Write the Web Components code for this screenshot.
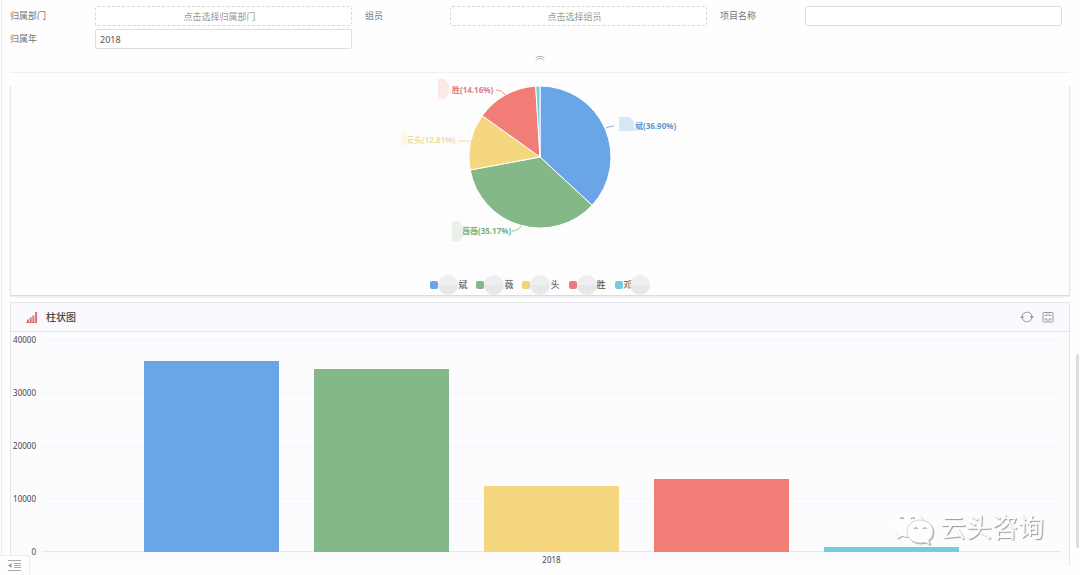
<!DOCTYPE html>
<html lang="zh-CN">
<head>
<meta charset="utf-8">
<title>柱状图</title>
<style>
html { height: 100%; }
body { margin: 0; min-height: 100%; background: #fefefe; color: #555; font: 9px/12px "Noto Sans", "Noto Sans CJK SC", sans-serif; }
</style>
</head>
<body>
<report-page></report-page>
<script>
const define = (name, html, setup) => customElements.define(name, class extends HTMLElement {
  connectedCallback() {
    if (this.shadowRoot) return;
    const root = this.attachShadow({ mode: "open" });
    const t = document.createElement("template");
    t.innerHTML = html;
    root.append(t.content.cloneNode(true));
    if (setup) setup(this, root);
  }
});

const SERIES = [
  { color: "#69a5e7", percent: 36.90, bar: 90.3 },
  { color: "#84b888", percent: 35.17, bar: 86.1 },
  { color: "#f4d77f", percent: 12.81, bar: 31.1 },
  { color: "#f27d76", percent: 14.16, bar: 34.4 },
  { color: "#75cddc", percent: 0.96, bar: 2.4 }
];

define("filter-field", `
<style>
:host { display: grid; grid-template-columns: 85px 1fr; align-items: center; padding-right: 13px; }
label { color: #777; }
input, button { box-sizing: border-box; width: 100%; height: 20px; margin: 0; padding: 0 4px; font: inherit; color: #555; background: #fff; border: 1px solid #dedede; border-radius: 2px; }
button { border: 1px dashed #d8d8d8; color: #999; text-align: center; padding: 1px 12px 0 4px; }
</style>`, (host, root) => {
  const label = document.createElement("label");
  label.htmlFor = "control";
  label.textContent = host.getAttribute("label");
  const picker = host.hasAttribute("prompt");
  const control = document.createElement(picker ? "button" : "input");
  control.id = "control";
  if (picker) { control.type = "button"; control.textContent = host.getAttribute("prompt"); }
  else { control.type = "text"; control.value = host.getAttribute("value") || ""; }
  root.append(label, control);
});

define("filter-bar", `
<style>
:host { display: block; padding-top: 6px; border-bottom: 1px solid #f0f0f1; }
form { display: grid; grid-template-columns: repeat(3, 1fr); row-gap: 3px; margin-right: -5px; }
.fold { display: block; margin: 4px auto 9px; padding: 0; width: 12px; height: 10px; border: 0; background: none; }
svg { display: block; margin: auto; }
</style>
<form>
  <filter-field label="归属部门" prompt="点击选择归属部门"></filter-field>
  <filter-field label="组员" prompt="点击选择组员"></filter-field>
  <filter-field label="项目名称"></filter-field>
  <filter-field label="归属年" value="2018"></filter-field>
</form>
<button class="fold" type="button" aria-label="收起"><svg width="10" height="6" viewBox="0 0 10 6" fill="none" stroke="#aaa" stroke-width=".9"><path d="M.5 3.200 3 1.500h4l2.500 1.700M1.500 5 3.500 3.500h3L8.500 5"/></svg></button>`);

define("pie-chart", `
<style>
:host { display: block; text-align: center; }
svg { display: block; margin: auto; width: 320px; height: 189px; overflow: visible; }
text { font-size: 8px; font-weight: 700; }
</style>
<svg viewBox="-160 -71 320 189" role="img" aria-label="饼图">
  <g id="slices" stroke="#fff" stroke-width="1" stroke-linejoin="round"></g>
  <g fill="none" stroke-width="1">
    <path stroke="#8fb5d8" d="M66-29q4-2 8-2"/>
    <path stroke="#9cbf9f" d="M-19 69q-3 5-9 5"/>
    <path stroke="#f3dfa0" d="M-70-16h-12"/>
    <path stroke="#d99" d="M-35-62q-3-5-9-5"/>
  </g>
  <g>
    <text x="95" y="-28" fill="#5e98d0">斌(36.90%)</text>
    <text x="-78" y="77" fill="#78b07c">薇薇(35.17%)</text>
    <text x="-134" y="-14" fill="#efdc9c">云头(12.81%)</text>
    <text x="-88" y="-64" fill="#e27c7c">胜(14.16%)</text>
  </g>
  <path fill="#d6e8f6" d="M79-40h11l4 5v6h3v3H79z"/>
  <path fill="#e9f1ea" d="M-88 64h7l4 5v11l-4 4h-7z"/>
  <path fill="#fdf8e6" d="M-139-26h4l3 5v9l-7 3z"/>
  <path fill="#fbe8e8" d="M-102-78h7l4 6v8l-4 6h-7z"/>
</svg>`, (host, root) => {
  const group = root.getElementById("slices");
  const point = p => {
    const a = p / 100 * 2 * Math.PI;
    return (71 * Math.sin(a)).toFixed(2) + " " + (-71 * Math.cos(a)).toFixed(2);
  };
  let from = 0;
  for (const s of SERIES) {
    const path = document.createElementNS("http://www.w3.org/2000/svg", "path");
    path.setAttribute("d", `M0 0L${point(from)}A71 71 0 0 1 ${point(from + s.percent)}Z`);
    path.setAttribute("fill", s.color);
    group.append(path);
    from += s.percent;
  }
});

define("legend-item", `
<style>
:host { display: flex; align-items: center; height: 20px; font-size: 9px; color: #444; }
i { width: 8px; height: 8px; border-radius: 2px; background: var(--swatch); }
b { width: 20px; height: 20px; border-radius: 50%; background: linear-gradient(#eeedf0 50%, #e8e7ea 50%); }
:host([trailing]) b { order: 3; margin-left: -3px; }
:host([trailing]) i { margin-right: 1px; }
</style><i></i><b></b><slot></slot>`);

define("chart-legend", `
<style>:host { display: flex; justify-content: center; gap: 9px; }</style>
<legend-item style="--swatch:#69a5e7">斌</legend-item>
<legend-item style="--swatch:#84b888">薇</legend-item>
<legend-item style="--swatch:#f0d27b">头</legend-item>
<legend-item style="--swatch:#ee7d78">胜</legend-item>
<legend-item trailing style="--swatch:#75cddc">邓</legend-item>`);

define("chart-panel", `
<style>
:host { display: block; border: 1px solid #e4e4ea; background: #fcfbfe; }
header { display: flex; align-items: center; height: 28px; padding: 0 14px; border-bottom: 1px solid #e2e2e8; background: #fafafe; }
h2 { flex: 1; margin: 0 0 0 8px; font-size: 10px; line-height: 14px; font-weight: 500; color: #444; }
button { padding: 0; margin-left: 7px; border: 0; background: none; width: 14px; height: 14px; }
svg { display: block; }
:host([plain]) { border-top: 0; border-bottom-color: #dcdce0; background: #fdfdfe; box-shadow: 0 1px 2px #e8e8ee; }
:host([plain]) header { display: none; }
:host([open-end]) { border-bottom: 0; }
</style>
<header>
  <svg width="13" height="13" viewBox="0 0 13 13" fill="none" stroke="#dc7378"><path d="M1 11.5h11"/><path stroke-width="2" d="M3 11V8.500M5.700 11V6.500M8.400 11V4.500M11.100 11V1"/></svg>
  <h2><slot name="title"></slot></h2>
  <button type="button" aria-label="刷新"><svg width="14" height="14" viewBox="0 0 14 14"><path fill="none" stroke="#999" d="M2 6.500a5 5 0 0 1 9.800-.5M12 7.500a5 5 0 0 1-9.800.5"/><path fill="#999" d="M9.800 6h4.200l-2.100 2.700zM0 8h4.200L2 5.300z"/></svg></button>
  <button type="button" aria-label="全屏"><svg width="14" height="14" viewBox="0 0 14 14" fill="none" stroke="#999"><rect x="2" y="2.500" width="10" height="9.500" rx="1"/><path d="M3.500 5.500H6V3.500M8 3.500v2h2.500M3.500 9H6v2M8 11V9h2.500" stroke-width=".9"/></svg></button>
</header>
<slot></slot>`);

define("bar-chart", `
<style>
:host { display: grid; grid-template-columns: 25px 1fr; column-gap: 6px; padding: 2px 8px 0 0; font-size: 8px; color: #444; }
.axis { display: flex; flex-direction: column; justify-content: space-between; text-align: right; height: 224px; }
.plot { display: grid; height: 212px; margin-top: 6px; }
.lines, .bars { grid-area: 1 / 1; }
.lines { display: grid; grid-template-rows: repeat(4, 1fr); border-bottom: 1px solid #e6e6ec; }
.lines i { border-top: 1px solid #f5f4f8; }
.bars { display: flex; align-items: flex-end; gap: 4.35%; padding: 0 10%; }
.bars i { flex: 1; }
.name { grid-column: 2; text-align: center; margin-top: -4px; }
</style>
<div class="axis"><span>40000</span><span>30000</span><span>20000</span><span>10000</span><span>0</span></div>
<div class="plot"><div class="lines"><i></i><i></i><i></i><i></i></div><div class="bars"></div></div>
<div class="name">2018</div>`, (host, root) => {
  const bars = root.querySelector(".bars");
  for (const s of SERIES) {
    const bar = document.createElement("i");
    bar.style.height = s.bar + "%";
    bar.style.background = s.color;
    bars.append(bar);
  }
});

define("brand-mark", `
<style>
:host { display: flex; align-items: center; gap: 5px; color: #fdfcff; font-size: 26px; line-height: 38px; text-shadow: 1px 1px 1px #999; }
svg { display: block; filter: drop-shadow(1px 1px 0 #aaa); }
</style>
<svg width="44" height="38" viewBox="0 0 44 38"><path fill="#fdfcff" d="M17 3C8 3 1 9 1 16c0 5 2.500 8 6 10.500L5.500 31l5.500-3c2 .7 4 1 6 1 9 0 16-6 16-13S26 3 17 3z"/><path fill="#fdfcff" stroke="#ccc" stroke-width=".8" d="M29 12c-7.500 0-13 5-13 11.500S21.500 35 29 35c2 0 3.500-.3 5-.8l5 2.500-1.400-4.200C40.500 30.500 42 27 42 23.500 42 17 36.500 12 29 12z"/><g fill="none" stroke="#999" stroke-width="1.200"><path d="M9 11q2-2.500 4 0M20 11q2-2.500 4 0M23 21q1.500-2.500 3.500 0M32 21q1.500-2.500 3.500 0"/></g></svg>
<span>云头咨询</span>`);

define("report-page", `
<style>
:host { display: block; box-sizing: border-box; min-height: 100vh; margin-left: 1px; border-left: 1px solid #ededf0; padding: 0 10px 11px 8px; }
main { display: block; }
.pie { margin-top: 13px; }
.bar { margin-top: 6px; }
.thumb { position: fixed; right: 1px; top: 354px; width: 3px; height: 194px; border-radius: 2px; background: #dedee2; }
brand-mark { position: fixed; right: 36px; bottom: 29px; }
.menu { position: fixed; left: 0; bottom: 0; width: 30px; height: 20px; padding: 0 0 0 8px; border: 1px solid #eeeef2; border-width: 1px 1px 0 0; background: #fefefe; }
.menu svg { display: block; }
</style>
<main>
  <filter-bar></filter-bar>
  <chart-panel plain class="pie"><pie-chart></pie-chart><chart-legend></chart-legend></chart-panel>
  <chart-panel open-end class="bar"><span slot="title">柱状图</span><bar-chart></bar-chart></chart-panel>
</main>
<div class="thumb"></div>
<brand-mark></brand-mark>
<button class="menu" type="button" aria-label="展开菜单"><svg width="13" height="11" viewBox="0 0 13 11" fill="none" stroke="#aaa"><path d="M0 .5h13M6 3.500h7M6 5.500h7M6 7.500h7M0 10.500h13"/><path fill="#999" stroke="none" d="M0 5.500 3.500 3v5z"/></svg></button>`);
</script>
</body>
</html>
